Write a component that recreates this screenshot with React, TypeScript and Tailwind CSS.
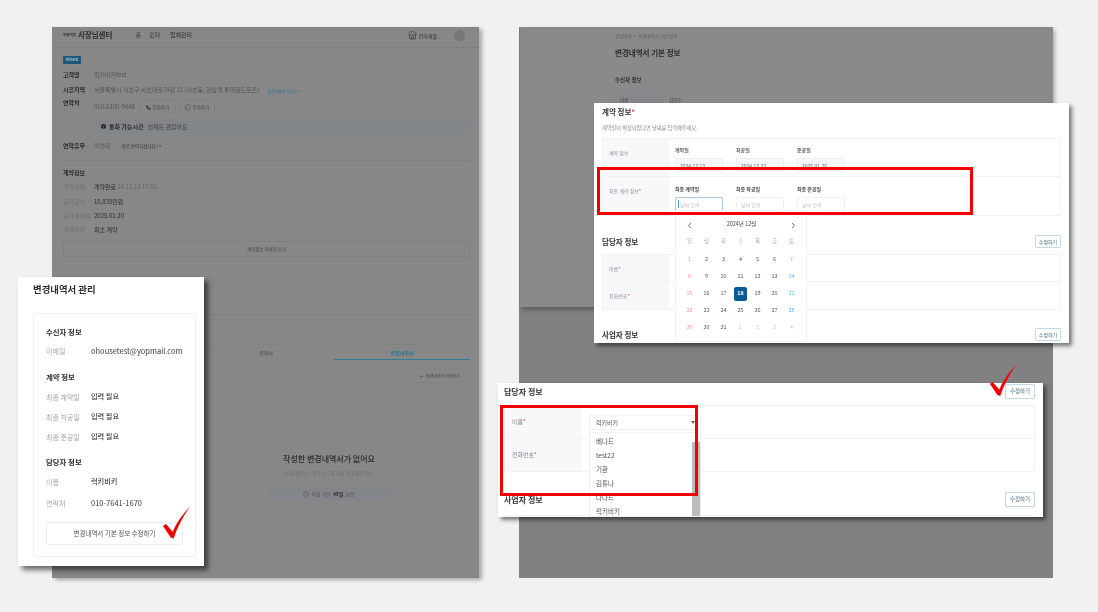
import React from "react";
import { ChevronLeft, ChevronRight, Clock, MessageCircle, Phone, Plus, Store } from "lucide-react";

const InfoRow = ({ label, children }: { label: string; children: React.ReactNode }) => (
  <div className="flex h-[14px] items-center">
    <div className="w-[31px] shrink-0 font-bold text-[#2c2c2c]">{label}</div>
    {children}
  </div>
);

const ContractRow = ({ label, children }: { label: string; children: React.ReactNode }) => (
  <div className="flex h-[14px] items-center">
    <div className="w-[31px] shrink-0 text-[#707070]">{label}</div>
    <div className="text-[#2c2c2c]">{children}</div>
  </div>
);

const OwnerPage = () => (
  <div className="absolute left-[52px] top-[27px] h-[551px] w-[427px] bg-[#878787] shadow-[3px_2px_4px_rgba(0,0,0,0.3)]">
    <div className="flex h-full flex-col text-[6px] leading-none text-[#2c2c2c] blur-[0.5px]">
      <div className="flex h-[21px] shrink-0 items-center border-b border-[#7f7f7f] pb-[4px] pl-[11px] pr-[14px]">
        <span className="text-[3.5px] font-bold">오늘의집</span>
        <span className="ml-[2px] text-[7.5px] font-bold">사장님센터</span>
        <span className="ml-[23px]">홈</span>
        <span className="ml-[8px]">오더</span>
        <span className="ml-[10px]">업체관리</span>
        <Store size={9} className="ml-auto" strokeWidth={1.5} />
        <span className="ml-[2px] text-[5px]">건자재몰</span>
        <span className="ml-[17px] h-[11px] w-[11px] rounded-full bg-[#767676]" />
      </div>
      <div className="flex flex-1 flex-col pl-[11px] pr-[9px]">
        <div className="mt-[8px] flex h-[8px] w-[18px] items-center justify-center rounded-[1px] bg-[#1d5878] text-[3.5px] text-[#d5e2ea]">계약완료</div>
        <div className="mt-[4px]">
          <InfoRow label="고객명">
            <span className="text-[#555]">럭키비키test</span>
          </InfoRow>
        </div>
        <div className="mt-[1px]">
          <InfoRow label="시공지역">
            <span className="text-[#555]">서울특별시 서초구 서초대로74길 51 (서초동, 강남역 롯데골드로즈)</span>
            <span className="ml-[8px] text-[5px] text-[#2f6d86]">지도에서 보기 &gt;</span>
          </InfoRow>
        </div>
        <div className="mt-[3px] flex h-[14px] items-center">
          <div className="w-[31px] shrink-0 self-start font-bold">연락처</div>
          <span className="text-[#555]">010-5100-9448</span>
          <span className="ml-[4px] flex h-[14px] w-[37px] items-center justify-center gap-[2px] rounded-[1px] border border-[#7f7f7f] text-[4.5px] text-[#444]">
            <Phone size={5} fill="#2c2c2c" />전화하기
          </span>
          <span className="ml-[3px] flex h-[14px] w-[36px] items-center justify-center gap-[2px] rounded-[1px] border border-[#7f7f7f] text-[4.5px] text-[#444]">
            <MessageCircle size={6} />문자하기
          </span>
        </div>
        <div className="ml-[32px] mt-[5px] flex h-[15px] items-center gap-[3px] rounded-[1px] bg-[#82868a] pl-[6px]">
          <span className="flex h-[5px] w-[5px] items-center justify-center rounded-full bg-[#2a2a2a] text-[4px] text-[#999]">i</span>
          <span className="font-bold">통화 가능시간</span>
          <span className="ml-[1px] text-[#444]">언제든 괜찮아요</span>
        </div>
        <div className="mt-[5px]">
          <InfoRow label="연락유무">
            <span className="text-[#5a5a5a]">미연락</span>
            <span className="ml-[11px] text-[4.5px] text-[#333]">따로 연락하셨나요? &gt;</span>
          </InfoRow>
        </div>
        <div className="mt-[7px] border-t border-[#7f7f7f]" />
        <div className="mt-[5px] flex h-[14px] items-center font-bold">계약정보</div>
        <ContractRow label="계약상태">계약완료 <span className="text-[#666]">24.12.13 17:01</span></ContractRow>
        <div className="mt-[1px]"><ContractRow label="공사금액">10,835만원</ContractRow></div>
        <ContractRow label="공사종료일">2025.01.20</ContractRow>
        <ContractRow label="계약이력">최초 계약</ContractRow>
        <div className="mt-[4px] flex h-[16px] items-center justify-center rounded-[1px] border border-[#7f7f7f] text-[4.5px] text-[#444]">계약정보 자세히 보기</div>
        <div className="mt-[57px] border-t border-[#7f7f7f]" />
        <div className="ml-[135px] flex flex-col">
          <div className="mt-[29px] flex h-[16px] border-t border-[#828282] text-[5px]">
            <div className="flex w-1/2 items-center justify-center text-[#444]">견적서</div>
            <div className="flex w-1/2 items-center justify-center border-b border-[#2f7f98] font-bold text-[#2f7187]">변경내역서</div>
          </div>
          <div className="mt-[9px] flex h-[14px] w-[61px] items-center justify-center gap-[2px] self-end rounded-[1px] border border-[#828282] text-[4px] text-[#444]">
            <Plus size={5} />변경내역서 작성하기
          </div>
          <div className="mt-[69px] flex flex-col items-center self-center pr-[10px]">
            <div className="flex h-[14px] items-center text-[8px] font-medium">작성한 변경내역서가 없어요</div>
            <div className="flex h-[14px] items-center text-[4.8px] text-[#6e6e6e]">변경내역서는 준공 후 7일 이내 작성해주세요.</div>
            <div className="mt-[7px] flex h-[13px] w-[122px] items-center justify-center gap-[2px] rounded-[1px] bg-[#82858a] text-[5px] text-[#555]">
              <Clock size={6} />작성 기한 <b className="text-[#2c2c2c]">45일</b> 남음
            </div>
          </div>
        </div>
      </div>
    </div>
  </div>
);

const ManageRow = ({ label, value, dark }: { label: string; value: string; dark?: boolean }) => (
  <div className="flex h-[20px] items-center">
    <div className="w-[45px] shrink-0 text-[7px] text-[#a3a6aa]">{label}</div>
    <div className={dark ? "text-[7.5px] text-[#3a3a3a]" : "text-[7.2px] font-medium text-[#3a3a3a]"}>{value}</div>
  </div>
);

const Check = ({ className }: { className: string }) => (
  <svg className={className} viewBox="0 0 28 33">
    <path d="M0 20 L3 18 L10 26 C14 17 20 8 28 0 C21 10 15 21 11 33 L8 32 Z" fill="#f40000" />
  </svg>
);

const ManageCard = () => (
  <div className="absolute left-[18px] top-[277px] h-[289px] w-[186px] bg-white shadow-[4px_4px_5px_rgba(0,0,0,0.55)]">
    <div className="flex h-full flex-col leading-none blur-[0.4px]">
      <div className="ml-[15px] mt-[8px] flex h-[10px] items-center text-[9.4px] font-bold text-[#2c2c2c]">변경내역서 관리</div>
      <div className="ml-[15px] mr-[8px] mt-[18px] flex h-[244px] flex-col rounded-[2px] border border-[#f0f1f2] px-[12px]">
        <div className="mt-[12px] flex h-[11px] items-center text-[7.4px] font-bold text-[#2c2c2c]">수신자 정보</div>
        <div className="mt-[4px]"><ManageRow label="이메일" value="ohousetest@yopmail.com" dark /></div>
        <div className="mt-[10px] flex h-[11px] items-center text-[7.4px] font-bold text-[#2c2c2c]">계약 정보</div>
        <div className="mt-[5px]"><ManageRow label="최종 계약일" value="입력 필요" /></div>
        <ManageRow label="최종 착공일" value="입력 필요" />
        <ManageRow label="최종 준공일" value="입력 필요" />
        <div className="mt-[9px] flex h-[11px] items-center text-[7.4px] font-bold text-[#2c2c2c]">담당자 정보</div>
        <div className="mt-[5px]"><ManageRow label="이름" value="럭키비키" /></div>
        <div className="mt-[1px]"><ManageRow label="연락처" value="010-7641-1670" dark /></div>
        <div className="mt-[9px] flex h-[23px] items-center justify-center rounded-[2px] border border-[#eceeef] text-[6.5px] text-[#555]">변경내역서 기본 정보 수정하기</div>
      </div>
    </div>
    <Check className="absolute left-[145px] top-[229px] h-[33px] w-[27px]" />
  </div>
);

const BackPage = () => (
  <>
    <div className="absolute left-[519px] top-[27px] h-[551px] w-[534px] bg-[#818181]" />
    <div className="absolute left-[520px] top-[27px] h-[280px] w-[533px] bg-[#8a8a8a] shadow-[2px_3px_4px_rgba(0,0,0,0.28)]">
      <div className="flex flex-col pl-[95px] pt-[5px] leading-none text-[#2c2c2c] blur-[0.5px]">
        <div className="flex h-[8px] items-center text-[4.5px] text-[#5d5d5d]">상담내역 &nbsp;&gt;&nbsp; 변경내역서 기본 정보</div>
        <div className="mt-[6px] flex h-[14px] items-center text-[7.5px] font-bold">변경내역서 기본 정보</div>
        <div className="mt-[14px] flex h-[14px] items-center text-[5.5px] font-bold">수신자 정보</div>
        <div className="mt-[1px] flex h-[22px] w-[420px] border-t border-[#858585] text-[4.5px]">
          <div className="flex w-[49px] items-center bg-[#85878a] pl-[5px] text-[#444]">이름</div>
          <div className="flex items-center pl-[5px] text-[#444]">김민수</div>
        </div>
      </div>
    </div>
  </>
);

const DateField = ({ label, value, focused, bold }: { label: string; value: string; focused?: boolean; bold?: boolean }) => (
  <div className="flex w-[48px] flex-col">
    <div className={bold ? "flex h-[10px] items-center text-[5px] font-bold text-[#444]" : "flex h-[10px] items-center text-[5px] font-medium text-[#444]"}>{label}</div>
    {focused ? (
      <div className="mt-[4px] flex h-[14px] items-center rounded-[1px] border border-[#a9c8dc] pl-[2px] text-[5px] text-[#c3c5c8]">
        <span className="mr-[1px] h-[8px] w-px bg-[#4f93c2]" />{value}
      </div>
    ) : bold ? (
      <div className="mt-[4px] flex h-[14px] items-center rounded-[1px] border border-[#eff0f1] pl-[4px] text-[5px] text-[#c3c5c8]">{value}</div>
    ) : (
      <div className="mt-[4px] flex h-[14px] items-center rounded-[1px] border border-[#eeeff0] bg-[#f7f8f9] pl-[4px] text-[5px] text-[#666]">{value}</div>
    )}
  </div>
);

const SectionHead = ({ title, large }: { title: string; large?: boolean }) => (
  <div className="flex items-center justify-between">
    <div className={large ? "text-[8px] font-bold text-[#333]" : "text-[7.5px] font-bold text-[#333]"}>{title}</div>
    {large ? (
      <div className="flex h-[15px] w-[30px] items-center justify-center rounded-[1px] border-[1.5px] border-[#c3d9e8] text-[5.5px] font-medium text-[#6b8ba0]">수정하기</div>
    ) : (
      <div className="flex h-[13px] w-[26px] items-center justify-center rounded-[1px] border-[1.5px] border-[#c3d9e8] text-[5px] font-medium text-[#6b8ba0]">수정하기</div>
    )}
  </div>
);

const weeks = [
  ["1", "2", "3", "4", "5", "6", "7"],
  ["8", "9", "10", "11", "12", "13", "14"],
  ["15", "16", "17", "18", "19", "20", "21"],
  ["22", "23", "24", "25", "26", "27", "28"],
  ["29", "30", "31", "1", "2", "3", "4"],
];

const Calendar = () => (
  <div className="absolute left-[81px] top-[107px] h-[132px] w-[132px] rounded-[1px] border border-[#f0f1f2] bg-white pl-[5px] leading-none blur-[0.3px]">
    <div className="flex h-[25px] w-[119px] items-center justify-between pl-[4px] pr-[2px] pt-[3px] text-[#444]">
      <ChevronLeft size={9} />
      <span className="text-[5.5px]">2024년 12월</span>
      <ChevronRight size={9} />
    </div>
    <div className="grid h-[11px] w-[119px] grid-cols-7 items-center text-center text-[5.5px] text-[#a8abae]">
      {["일", "월", "화", "수", "목", "금", "토"].map((d) => (
        <div key={d}>{d}</div>
      ))}
    </div>
    <div className="mt-[4px] grid w-[119px] grid-cols-7 text-center text-[5.5px]">
      {weeks.flatMap((week, w) =>
        week.map((d, i) => {
          const muted = w === 4 && i > 2;
          let color = "text-[#555]";
          if (muted) color = "text-[#c4c6c8]";
          else if (i === 0) color = "text-[#f0989c]";
          else if (i === 6) color = "text-[#5cc0dd]";
          return (
            <div key={w + "-" + i} className="flex h-[17px] items-center justify-center">
              {d === "18" ? (
                <span className="flex h-[14px] w-[13px] items-center justify-center rounded-[2px] bg-[#0b5a96] font-bold text-white">18</span>
              ) : (
                <span className={color}>{d}</span>
              )}
            </div>
          );
        })
      )}
    </div>
  </div>
);

const ContractCard = () => (
  <div className="absolute left-[594px] top-[103px] h-[240px] w-[475px] bg-white shadow-[3px_3px_4px_rgba(0,0,0,0.5)]">
    <div className="h-full overflow-hidden">
      <div className="flex flex-col px-[8px] pt-[3px] leading-none blur-[0.4px]">
        <div className="flex h-[12px] items-center text-[7.5px] font-bold text-[#333]">
          계약 정보<span className="text-[#e5484d]">*</span>
        </div>
        <div className="mt-[4px] flex h-[12px] items-center text-[5.2px] text-[#888]">계약일이 확정되었다면 날짜를 입력해주세요.</div>
        <div className="mt-[4px] border border-[#f1f2f3]">
          <div className="flex h-[38px] border-b border-[#f1f2f3]">
            <div className="w-[66px] bg-[#f7f8fa] pl-[6px] pt-[11px] text-[5px] text-[#8b8e92]">계약 정보</div>
            <div className="flex gap-[13px] pl-[6px] pt-[5px]">
              <DateField label="계약일" value="2024.12.13" />
              <DateField label="착공일" value="2024.12.23" />
              <DateField label="준공일" value="2025.01.20" />
            </div>
          </div>
          <div className="flex h-[38px]">
            <div className="w-[66px] bg-[#f7f8fa] pl-[6px] pt-[11px] text-[5px] text-[#8b8e92]">
              최종 계약 정보<span className="text-[#e5484d]">*</span>
            </div>
            <div className="flex gap-[13px] pl-[6px] pt-[6px]">
              <DateField label="최종 계약일" value="날짜 입력" focused bold />
              <DateField label="최종 착공일" value="날짜 입력" bold />
              <DateField label="최종 준공일" value="날짜 입력" bold />
            </div>
          </div>
        </div>
        <div className="mt-[19px]"><SectionHead title="담당자 정보" /></div>
        <div className="mt-[6px] border border-[#f1f2f3]">
          <div className="flex h-[27px] border-b border-[#f1f2f3]">
            <div className="flex w-[66px] items-center bg-[#f7f8fa] pl-[6px] text-[5px] text-[#8b8e92]">
              이름<span className="text-[#e5484d]">*</span>
            </div>
          </div>
          <div className="flex h-[27px]">
            <div className="flex w-[66px] items-center bg-[#f7f8fa] pl-[6px] text-[5px] text-[#8b8e92]">
              전화번호<span className="text-[#e5484d]">*</span>
            </div>
          </div>
        </div>
        <div className="mt-[18px]"><SectionHead title="사업자 정보" /></div>
      </div>
      <Calendar />
    </div>
    <div className="absolute left-[3px] top-[64px] h-[48px] w-[376px] border-[3px] border-[#f40000]" />
  </div>
);

const staff = ["베나드", "test22", "기환", "김튜나", "나나드", "럭키비키"];

const StaffCard = () => (
  <div className="absolute left-[498px] top-[383px] h-[134px] w-[545px] bg-white shadow-[3px_3px_4px_rgba(0,0,0,0.5)]">
    <div className="h-full overflow-hidden">
      <div className="flex flex-col pl-[6px] pr-[8px] pt-[1px] leading-none blur-[0.4px]">
        <SectionHead title="담당자 정보" large />
        <div className="mt-[6px] border border-[#f1f2f3]">
          <div className="flex h-[33px] border-b border-[#f1f2f3]">
            <div className="flex w-[77px] items-center bg-[#f7f8fa] pl-[7px] text-[6px] text-[#8b8e92]">
              이름<span className="text-[#e5484d]">*</span>
            </div>
            <div className="ml-[7px] mt-[9px] flex h-[15px] w-[112px] items-center justify-between rounded-[1px] border border-[#eeeff0] pl-[6px] pr-[5px] text-[6px] text-[#555]">
              럭키비키
              <span className="h-0 w-0 border-x-[2.5px] border-t-[3px] border-x-transparent border-t-[#666]" />
            </div>
          </div>
          <div className="flex h-[32px]">
            <div className="flex w-[77px] items-center bg-[#f7f8fa] pl-[7px] text-[6px] text-[#8b8e92]">
              전화번호<span className="text-[#e5484d]">*</span>
            </div>
          </div>
        </div>
        <div className="mt-[20px]"><SectionHead title="사업자 정보" large /></div>
        <div className="mt-[8px] h-[10px] border border-[#f1f2f3]">
          <div className="h-full w-[77px] bg-[#f7f8fa]" />
        </div>
      </div>
      <div className="absolute left-[91px] top-[49px] flex h-[85px] w-[112px] border border-[#eeeff0] bg-white blur-[0.3px]">
        <div className="flex flex-1 flex-col pl-[6px] pt-[1px] text-[6.5px] leading-none text-[#555]">
          {staff.map((name) => (
            <div key={name} className="flex h-[14px] shrink-0 items-center">{name}</div>
          ))}
        </div>
        <div className="mt-[9px] w-[8px] bg-[#bcbcbc]" />
      </div>
    </div>
    <div className="absolute left-[2px] top-[22px] h-[91px] w-[198px] border-[3px] border-[#f40000]" />
    <Check className="absolute left-[491px] top-[-18px] h-[31px] w-[28px]" />
  </div>
);

export default function App() {
  return (
    <div className="relative h-[612px] w-[1098px] overflow-hidden bg-[#f1f1f1] font-['Noto_Sans_CJK_KR','Noto_Sans',sans-serif]">
      <OwnerPage />
      <ManageCard />
      <BackPage />
      <ContractCard />
      <StaffCard />
    </div>
  );
}
